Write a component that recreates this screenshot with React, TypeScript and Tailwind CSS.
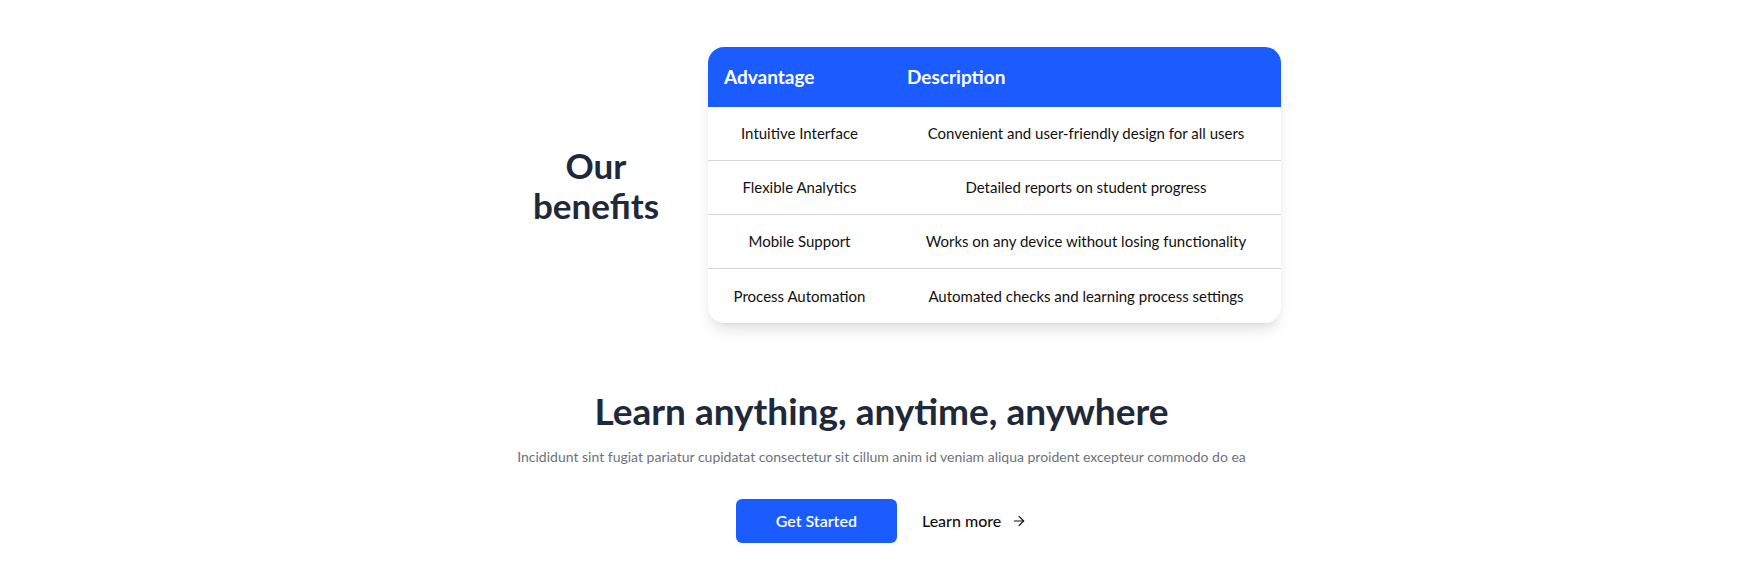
import React from 'react';
import { ArrowRight } from 'lucide-react';

const benefits = [
  { title: 'Intuitive Interface', text: 'Convenient and user-friendly design for all users' },
  { title: 'Flexible Analytics', text: 'Detailed reports on student progress' },
  { title: 'Mobile Support', text: 'Works on any device without losing functionality' },
  { title: 'Process Automation', text: 'Automated checks and learning process settings' },
];

const App: React.FC = () => {
  return (
    <div className="min-h-[578px] bg-white pl-[13px] font-['Lato','Liberation_Sans',sans-serif]">
      {/* Benefits */}
      <section className="pt-[47px]">
        <div className="mx-auto flex w-[799px] items-center justify-end gap-8">
          <h2 className="w-[160px] text-center text-[35px] font-bold leading-[40px] text-[#1e293b]">
            Our benefits
          </h2>
          <div className="w-[573px] overflow-hidden rounded-2xl bg-white shadow-lg">
            <div className="grid grid-cols-[183px_1fr] bg-[#1a5cff] text-[19px] font-bold text-white">
              <div className="px-4 py-4 leading-7">Advantage</div>
              <div className="px-4 py-4 leading-7">Description</div>
            </div>
            <div className="divide-y divide-[#d4d7dd]">
              {benefits.map((b) => (
                <div key={b.title} className="grid h-[54px] grid-cols-[183px_1fr] items-center text-center text-[15px] text-[#111]">
                  <div className="px-4">{b.title}</div>
                  <div className="px-4">{b.text}</div>
                </div>
              ))}
            </div>
          </div>
        </div>
      </section>

      {/* Call to action */}
      <section className="mt-[68px] flex flex-col items-center pb-[34px] text-center">
        <h2 className="text-[37px] font-bold leading-10 text-[#1e293b]">Learn anything, anytime, anywhere</h2>
        <p className="mt-4 text-sm text-[#6b7280]">
          Incididunt sint fugiat pariatur cupidatat consectetur sit cillum anim id veniam aliqua proident excepteur commodo do ea
        </p>
        <div className="mt-8 flex items-center gap-[25px]">
          <button className="rounded-md bg-[#1a5cff] px-10 py-2.5 text-base font-semibold text-white">
            Get Started
          </button>
          <button className="flex items-center gap-2.5 text-base font-medium text-[#111]">
            Learn more
            <ArrowRight size={16} strokeWidth={1.75} />
          </button>
        </div>
      </section>
    </div>
  );
};

export default App;
